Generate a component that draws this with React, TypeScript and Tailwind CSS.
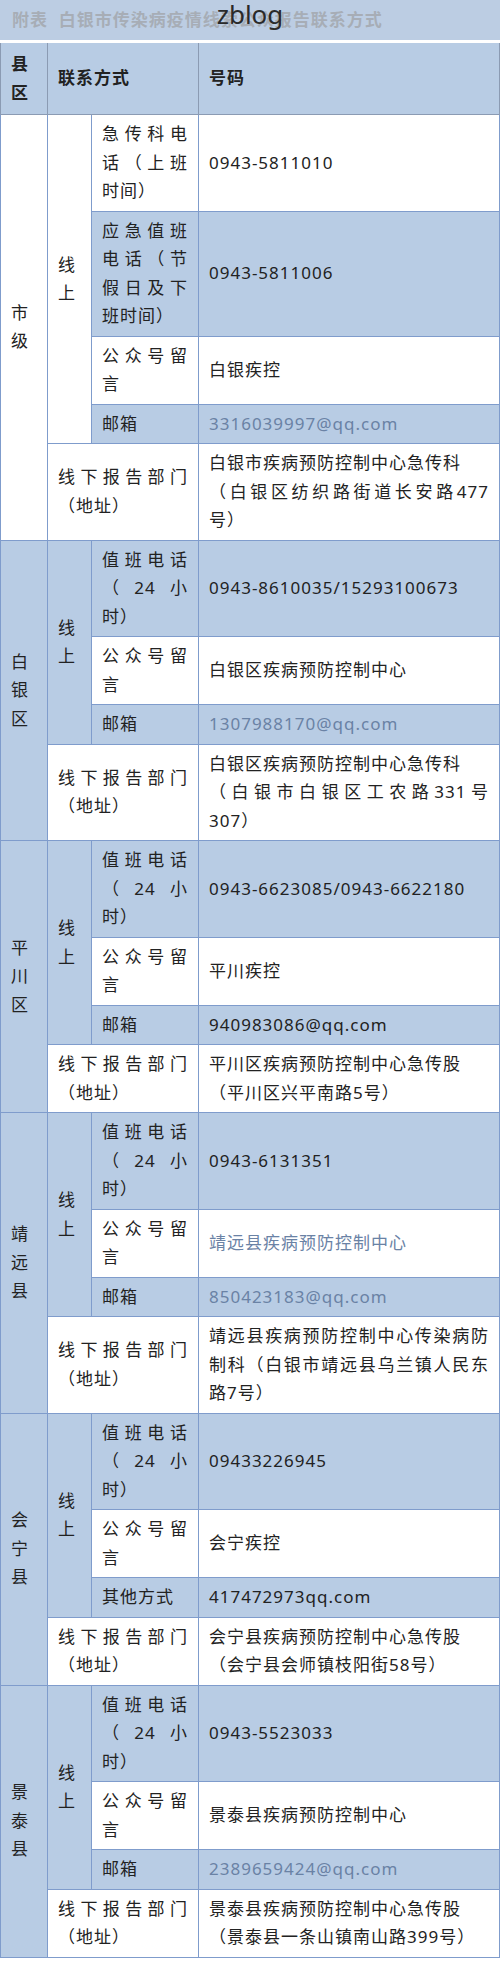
import React from "react";

type OnlineRow = { label: string; value: string; muted?: boolean };
type District = {
  name: string;
  white?: boolean;
  online: OnlineRow[];
  offline: string[];
};

const DUTY = "值班电话（24小时）";

const districts: District[] = [
  {
    name: "市级",
    white: true,
    online: [
      { label: "急传科电话（上班时间）", value: "0943-5811010" },
      { label: "应急值班电话（节假日及下班时间）", value: "0943-5811006" },
      { label: "公众号留言", value: "白银疾控" },
      { label: "邮箱", value: "3316039997@qq.com", muted: true },
    ],
    offline: ["白银市疾病预防控制中心急传科", "（白银区纺织路街道长安路477号）"],
  },
  {
    name: "白银区",
    online: [
      { label: DUTY, value: "0943-8610035/15293100673" },
      { label: "公众号留言", value: "白银区疾病预防控制中心" },
      { label: "邮箱", value: "1307988170@qq.com", muted: true },
    ],
    offline: ["白银区疾病预防控制中心急传科", "（白银市白银区工农路331号307）"],
  },
  {
    name: "平川区",
    online: [
      { label: DUTY, value: "0943-6623085/0943-6622180" },
      { label: "公众号留言", value: "平川疾控" },
      { label: "邮箱", value: "940983086@qq.com" },
    ],
    offline: ["平川区疾病预防控制中心急传股", "（平川区兴平南路5号）"],
  },
  {
    name: "靖远县",
    online: [
      { label: DUTY, value: "0943-6131351" },
      { label: "公众号留言", value: "靖远县疾病预防控制中心", muted: true },
      { label: "邮箱", value: "850423183@qq.com", muted: true },
    ],
    offline: ["靖远县疾病预防控制中心传染病防制科（白银市靖远县乌兰镇人民东路7号）"],
  },
  {
    name: "会宁县",
    online: [
      { label: DUTY, value: "09433226945" },
      { label: "公众号留言", value: "会宁疾控" },
      { label: "其他方式", value: "417472973qq.com" },
    ],
    offline: ["会宁县疾病预防控制中心急传股", "（会宁县会师镇枝阳街58号）"],
  },
  {
    name: "景泰县",
    online: [
      { label: DUTY, value: "0943-5523033" },
      { label: "公众号留言", value: "景泰县疾病预防控制中心" },
      { label: "邮箱", value: "2389659424@qq.com", muted: true },
    ],
    offline: ["景泰县疾病预防控制中心急传股", "（景泰县一条山镇南山路399号）"],
  },
];

const cell =
  "border border-[#7f9ccc] px-[10px] py-[5px] align-middle text-justify";

export default function App() {
  return (
    <div className="min-h-[1961px] w-[500px] bg-white font-['Noto_Sans','Noto_Sans_CJK_SC',sans-serif] text-[#222222] [text-spacing-trim:space-all]">
      <div className="relative flex h-[40px] items-center bg-[#bccde3] pl-[12px]">
        <span className="text-[17px] font-bold tracking-[1px] text-[#a7adb6]">
          附表&nbsp;&nbsp;白银市传染病疫情线索公众报告联系方式
        </span>
        <span className="absolute left-0 right-0 top-0 text-center text-[26px] font-normal leading-[28px] text-[#2a2a2a]">
          zblog
        </span>
      </div>
      <div className="h-[3px]" />
      <table className="w-[499px] table-fixed border-collapse text-[17px] leading-[28.5px] tracking-[1px]">
        <colgroup>
          <col className="w-[47px]" />
          <col className="w-[44px]" />
          <col className="w-[107px]" />
          <col className="w-[301px]" />
        </colgroup>
        <thead>
          <tr className="bg-[#b8cce4] font-bold">
            <th className="border-x border-b border-[#8b9bb3] px-[10px] py-[7px] text-left align-middle">
              县区
            </th>
            <th
              colSpan={2}
              className="border-x border-b border-[#8b9bb3] px-[10px] py-[7px] text-left align-middle"
            >
              联系方式
            </th>
            <th className="border-x border-b border-[#8b9bb3] px-[10px] py-[7px] text-left align-middle">
              号码
            </th>
          </tr>
        </thead>
        <tbody>
          {districts.map((d) => {
            const n = d.online.length;
            const sideBg = d.white ? "bg-white" : "bg-[#b8cce4]";
            return (
              <React.Fragment key={d.name}>
                {d.online.map((r, i) => {
                  const rowBg = (n - 1 - i) % 2 === 0 ? "bg-[#b8cce4]" : "bg-white";
                  return (
                    <tr key={r.label + i}>
                      {i === 0 && (
                        <td rowSpan={n + 1} className={`${cell} ${sideBg}`}>
                          {d.name}
                        </td>
                      )}
                      {i === 0 && (
                        <td rowSpan={n} className={`${cell} ${sideBg}`}>
                          线上
                        </td>
                      )}
                      <td className={`${cell} ${rowBg}`}>{r.label}</td>
                      <td
                        className={`${cell} ${rowBg} ${
                          r.muted ? "text-[#6a82a5]" : ""
                        }`}
                      >
                        {r.value}
                      </td>
                    </tr>
                  );
                })}
                <tr>
                  <td colSpan={2} className={`${cell} bg-white`}>
                    线下报告部门（地址）
                  </td>
                  <td className={`${cell} bg-white`}>
                    {d.offline.map((t, i) => (
                      <React.Fragment key={i}>
                        {i > 0 && <br />}
                        {t}
                      </React.Fragment>
                    ))}
                  </td>
                </tr>
              </React.Fragment>
            );
          })}
        </tbody>
      </table>
    </div>
  );
}
